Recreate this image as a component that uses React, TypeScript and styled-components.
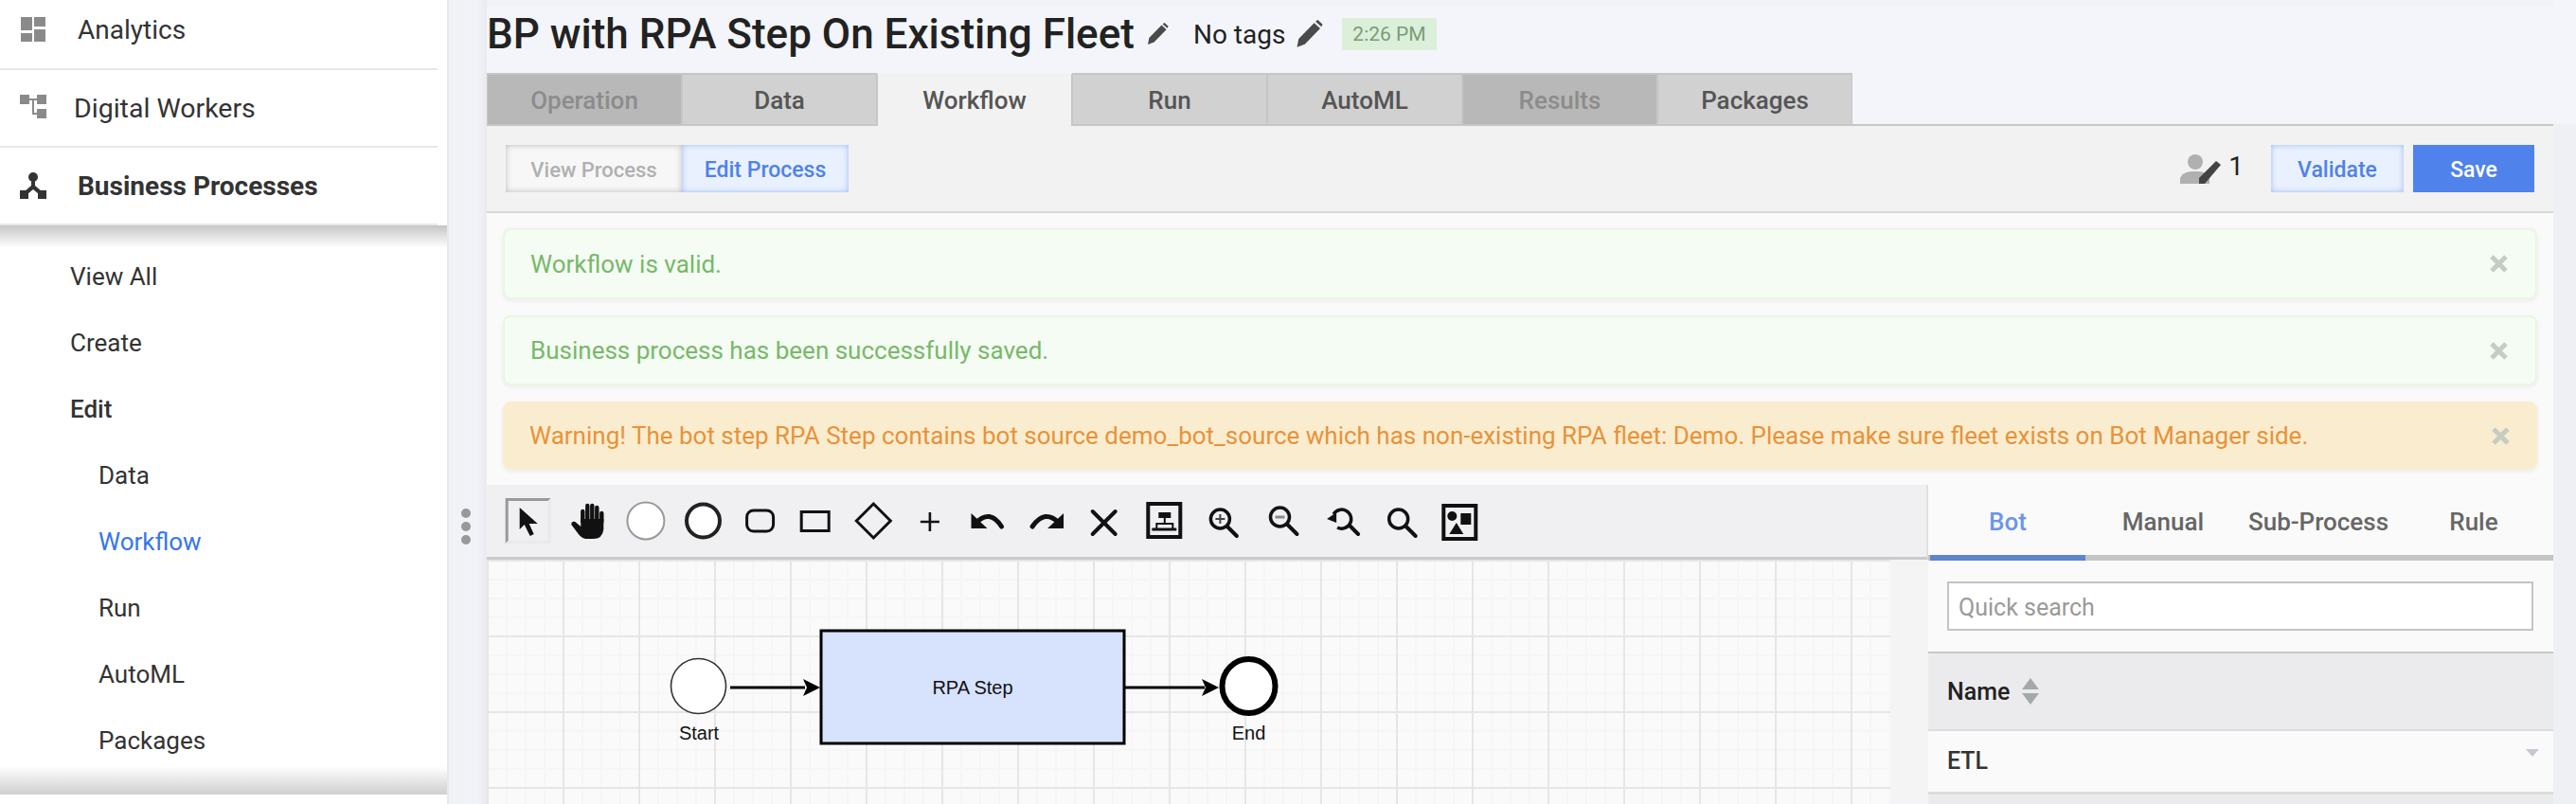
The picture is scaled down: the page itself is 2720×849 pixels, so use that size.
import styled, { createGlobalStyle } from "styled-components";

const GlobalStyle = createGlobalStyle`
  html, body {
    margin: 0;
    padding: 0;
    height: 849px;
    overflow: hidden;
    background: #f3f5fa;
    font-family: Roboto, "Liberation Sans", sans-serif;
  }
`;

const Page = styled.div`
  display: flex;
  width: 2720px;
  height: 849px;
  overflow: hidden;
  background: #f3f5fa;
`;

const Sidebar = styled.aside`
  flex: none;
  width: 472px;
  height: 849px;
  background: #fff;
  border-right: 2px solid #e8e8e8;
`;

const NavItem = styled.div<{ $first?: boolean; $active?: boolean; $indent: number; $size?: number }>`
  display: flex;
  align-items: center;
  box-sizing: border-box;
  height: ${(p) => (p.$first ? 74 : 82)}px;
  width: 462px;
  padding-bottom: ${(p) => (p.$first ? 9 : 0)}px;
  border-bottom: 2px solid #e8e8e8;
  padding-left: 21px;
  font-size: ${(p) => p.$size ?? 28}px;
  font-weight: ${(p) => (p.$active ? 700 : 400)};
  color: #333;

  svg {
    flex: none;
    width: 28px;
    height: 28px;
    margin-right: ${(p) => p.$indent}px;
  }
`;

const SubMenu = styled.div`
  box-sizing: border-box;
  height: 601px;
  padding-top: 19px;
  background:
    linear-gradient(#c6c6c6, #fff) top / 100% 24px no-repeat,
    linear-gradient(#fff, #cfcfcf) bottom / 100% 30px no-repeat,
    #fff;
`;

const SubItem = styled.div<{ $level: number; $current?: boolean; $open?: boolean }>`
  height: 70px;
  line-height: 70px;
  padding-left: ${(p) => (p.$level === 2 ? 104 : 74)}px;
  font-size: 26px;
  font-weight: ${(p) => (p.$open ? 500 : 400)};
  color: ${(p) => (p.$current ? "#3576ee" : "#333")};
`;

const Splitter = styled.div`
  flex: none;
  width: 40px;
  box-sizing: border-box;
  height: 849px;
  padding: 537px 4px 0 0;
  display: flex;
  flex-direction: column;
  align-items: center;
  gap: 4px;
  background: linear-gradient(90deg, #f0f2f6 0, #f1f3f8 76%, #e8eaee 100%);
`;

const Dot = styled.span`
  width: 10px;
  height: 10px;
  border-radius: 50%;
  background: #999;
`;

const Workspace = styled.main`
  flex: none;
  width: 2182px;
  height: 849px;
  overflow: hidden;
`;

const Gutter = styled.div`
  flex: 1;
  margin-top: 131px;
  background: #eef0f3;
`;

const TitleBar = styled.header`
  display: flex;
  align-items: center;
  box-sizing: border-box;
  height: 77px;
  padding: 0 0 12px 0;
  border-top: 7px solid #f1f2f6;
  color: #222;
`;

const Title = styled.h1`
  margin: 0;
  font-size: 44px;
  font-weight: 500;
  line-height: 1;
  white-space: nowrap;
`;

const PencilIcon = styled.svg<{ $size: number; $gap: number }>`
  flex: none;
  width: ${(p) => p.$size}px;
  height: ${(p) => p.$size}px;
  margin-left: ${(p) => p.$gap}px;
`;

const Tags = styled.span`
  margin-left: 26px;
  font-size: 28px;
`;

const TimeBadge = styled.span`
  margin-left: 20px;
  padding: 0 11px;
  height: 34px;
  line-height: 34px;
  background: #dcefd9;
  color: #7a9c78;
  font-size: 21px;
`;

const TabBar = styled.nav`
  display: flex;
  align-items: flex-start;
  box-sizing: border-box;
  height: 56px;
  border-bottom: 2px solid #c6c6c6;
`;

const Tab = styled.div<{ $state?: "active" | "disabled" }>`
  flex: none;
  box-sizing: border-box;
  width: 206px;
  height: ${(p) => (p.$state === "active" ? 56 : 54)}px;
  padding-top: 2px;
  line-height: 50px;
  text-align: center;
  font-size: 26px;
  font-weight: 500;
  border-top: 2px solid ${(p) => (p.$state === "active" ? "#f2f2f2" : "#c6c6c6")};
  border-left: 1px solid #c6c6c6;
  border-right: 1px solid #c6c6c6;
  background: ${(p) => (p.$state === "active" ? "#f2f2f2" : p.$state === "disabled" ? "#b8b8b8" : "#d1d1d1")};
  color: ${(p) => (p.$state === "disabled" ? "#8c8c8c" : "#555")};
`;

const ActionBar = styled.div`
  display: flex;
  align-items: center;
  box-sizing: border-box;
  height: 92px;
  padding: 0 20px;
  background: #f2f2f2;
  border-bottom: 2px solid #d8d8d8;
`;

const Button = styled.button<{ $kind: "ghost" | "soft" | "solid"; $width: number; $gap?: number }>`
  width: ${(p) => p.$width}px;
  height: 50px;
  margin-left: ${(p) => p.$gap ?? 0}px;
  padding: 2px 0 0;
  border: 0;
  font: 500 ${(p) => (p.$kind === "ghost" ? 22 : 23)}px Roboto, sans-serif;
  background: ${(p) => (p.$kind === "ghost" ? "#f7f7f7" : p.$kind === "soft" ? "#eaf1fe" : "#4f82ea")};
  color: ${(p) => (p.$kind === "ghost" ? "#b0b0b0" : p.$kind === "soft" ? "#4f82ea" : "#fff")};
  box-shadow: ${(p) =>
    p.$kind === "ghost" ? "inset 0 0 6px #b8b8b8" : p.$kind === "soft" ? "inset 0 0 6px #9db9f3" : "none"};
`;

const Spacer = styled.div`
  flex: 1;
`;

const UserCount = styled.div`
  display: flex;
  align-items: flex-start;
  margin-right: 29px;
  font-size: 28px;
  line-height: 30px;
  color: #222;
  svg {
    width: 44px;
    height: 34px;
    margin-right: 7px;
  }
`;

const Body = styled.div`
  background: #fafafa;
`;

const Alerts = styled.div`
  display: flex;
  flex-direction: column;
  gap: 17px;
  padding: 16px 17px;
`;

const Alert = styled.div<{ $kind: "ok" | "warn"; $height: number }>`
  display: flex;
  align-items: center;
  justify-content: space-between;
  box-sizing: border-box;
  height: ${(p) => p.$height}px;
  padding: 0 ${(p) => (p.$kind === "ok" ? 29 : 27)}px 0 ${(p) => (p.$kind === "ok" ? 27 : 26)}px;
  border-radius: 8px;
  font-size: 26px;
  background: ${(p) => (p.$kind === "ok" ? "#f4fcf3" : "#faedcf")};
  color: ${(p) => (p.$kind === "ok" ? "#78b86a" : "#e8923a")};
  border: 2px solid ${(p) => (p.$kind === "ok" ? "#e9f6e4" : "#faedcf")};
  box-shadow: 0 2px 5px rgba(0, 0, 0, 0.06);
`;

const CloseIcon = styled.svg`
  flex: none;
  width: 19px;
  height: 19px;
  stroke: #c7ccc3;
  stroke-width: 5;
`;

const Editor = styled.div`
  display: flex;
  height: 336px;
`;

const Modeler = styled.div`
  flex: none;
  width: 1522px;
  background: #f4f4f4;
`;

const ToolBar = styled.div`
  display: flex;
  box-sizing: border-box;
  height: 79px;
  padding-left: 13.3px;
  background: #f0f0f2;
  border-bottom: 3px solid #cbcbcb;
  border-right: 2px solid #e0e0e0;
`;

const ToolIcon = styled.svg`
  flex: none;
  width: 61.4px;
  height: 76px;
  overflow: visible;
`;

const Canvas = styled.div`
  width: 1482px;
  height: 260px;
  background-color: #fafafa;
  background-image:
    linear-gradient(90deg, #e6e6e6 2px, transparent 2px),
    linear-gradient(#e6e6e6 2px, transparent 2px),
    linear-gradient(90deg, #f6f6f6 2px, transparent 2px),
    linear-gradient(#f6f6f6 2px, transparent 2px);
  background-size: 80px 80px, 80px 80px, 20px 20px, 20px 20px;

  svg {
    display: block;
    width: 100%;
    height: 100%;
    overflow: visible;
  }
  text {
    font-family: "Liberation Sans", Arial, sans-serif;
    font-size: 20px;
    fill: #111;
    text-anchor: middle;
  }
`;

const Palette = styled.section`
  flex: none;
  width: 660px;
  box-sizing: border-box;
  background: #fafafa;
`;

const PaletteTabs = styled.div`
  display: flex;
  box-sizing: border-box;
  height: 80px;
  padding: 0 2px;
  border-bottom: 6px solid #c4c4c4;
`;

const PaletteTab = styled.div<{ $active?: boolean }>`
  flex: 1;
  height: 74px;
  line-height: 78px;
  text-align: center;
  font-size: 26px;
  font-weight: 500;
  color: ${(p) => (p.$active ? "#6a96e8" : "#666")};
  border-bottom: 6px solid ${(p) => (p.$active ? "#5c85cc" : "transparent")};
`;

const SearchWrap = styled.div`
  padding: 22px 21px 22px 20px;
`;

const SearchInput = styled.input`
  display: block;
  box-sizing: border-box;
  width: 100%;
  height: 52px;
  padding: 3px 10px 0;
  border: 2px solid #c4c4c4;
  background: #fff;
  font: 400 25px Roboto, sans-serif;
  outline: none;
  &::placeholder {
    color: #9a9a9a;
    opacity: 1;
  }
`;

const HeaderRow = styled.div`
  display: flex;
  align-items: center;
  box-sizing: border-box;
  height: 84px;
  padding-left: 20px;
  background: #ebebed;
  border-top: 2px solid #c8c8c8;
  border-bottom: 2px solid #ddd;
  font-size: 25px;
  font-weight: 500;
  color: #222;
  svg {
    width: 18px;
    height: 28px;
    margin-left: 13px;
  }
`;

const BodyRow = styled.div`
  position: relative;
  box-sizing: border-box;
  height: 67px;
  padding-left: 20px;
  line-height: 64px;
  font-size: 25px;
  font-weight: 500;
  color: #333;
  border-bottom: 3px solid #ddd;
`;

const RowCaret = styled.span`
  position: absolute;
  top: 19px;
  right: 15px;
  width: 0;
  height: 0;
  border-left: 7.5px solid transparent;
  border-right: 7.5px solid transparent;
  border-top: 8px solid #c5c8d0;
`;

const RowFill = styled.div`
  height: 30px;
  background: #ebebed;
`;

const Pencil = ({ size, gap }: { size: number; gap: number }) => (
  <PencilIcon $size={size} $gap={gap} viewBox="0 0 24 24">
    <path d="M2 23 L3.4 16 L16.5 2.6 L21.6 7.2 L8.6 20.6 Z" fill="#4a4a4a" />
    <path d="M17.6 1.4 L19.6 0 L23.6 3.8 L22.6 5.8 Z" fill="#4a4a4a" />
  </PencilIcon>
);

const Close = () => (
  <CloseIcon viewBox="0 0 19 19">
    <path d="M2 2L17 17M17 2L2 17" />
  </CloseIcon>
);

// viewBox keeps page coordinates so each glyph can be traced off the reference
const Tool = ({ slot, children }: { slot: number; children: React.ReactNode }) => (
  <ToolIcon viewBox={`${527.3 + 61.4 * slot} 513 61.4 76`} fill="none" stroke="#111" strokeWidth={3}>
    {children}
  </ToolIcon>
);

const tabs: { label: string; state?: "active" | "disabled" }[] = [
  { label: "Operation", state: "disabled" },
  { label: "Data" },
  { label: "Workflow", state: "active" },
  { label: "Run" },
  { label: "AutoML" },
  { label: "Results", state: "disabled" },
  { label: "Packages" },
];

export default function App() {
  return (
    <Page>
      <GlobalStyle />
      <Sidebar>
        <NavItem $first $indent={33}>
          <svg viewBox="0 0 28 28" fill="#8a8a8a">
            <rect x="1" y="0" width="12" height="14" />
            <rect x="15" y="0" width="12" height="10" />
            <rect x="1" y="17" width="12" height="9" />
            <rect x="15" y="13" width="12" height="13" />
          </svg>
          Analytics
        </NavItem>
        <NavItem $indent={29} $size={28.5}>
          <svg viewBox="0 0 28 28" fill="#8a8a8a">
            <rect x="0" y="0" width="10" height="10" />
            <rect x="18" y="0" width="10" height="10" />
            <rect x="18" y="15" width="10" height="10" />
            <path d="M10 4h8v2h-3v13h3v2h-5V6h-3z" />
          </svg>
          Digital Workers
        </NavItem>
        <NavItem $active $indent={33}>
          <svg viewBox="0 0 28 28" fill="#333">
            <circle cx="14" cy="5" r="5" />
            <rect x="0" y="19" width="9" height="9" />
            <rect x="19" y="19" width="9" height="9" />
            <path d="M12 8h4v6l7 6-3 3-6-5-6 5-3-3 7-6z" />
          </svg>
          Business Processes
        </NavItem>
        <SubMenu>
          <SubItem $level={1}>View All</SubItem>
          <SubItem $level={1}>Create</SubItem>
          <SubItem $level={1} $open>Edit</SubItem>
          <SubItem $level={2}>Data</SubItem>
          <SubItem $level={2} $current>Workflow</SubItem>
          <SubItem $level={2}>Run</SubItem>
          <SubItem $level={2}>AutoML</SubItem>
          <SubItem $level={2}>Packages</SubItem>
        </SubMenu>
      </Sidebar>

      <Splitter>
        <Dot />
        <Dot />
        <Dot />
      </Splitter>

      <Workspace>
        <TitleBar>
          <Title>BP with RPA Step On Existing Fleet</Title>
          <Pencil size={24} gap={12} />
          <Tags>No tags</Tags>
          <Pencil size={30} gap={10} />
          <TimeBadge>2:26 PM</TimeBadge>
        </TitleBar>

        <TabBar>
          {tabs.map((t) => (
            <Tab key={t.label} $state={t.state}>
              {t.label}
            </Tab>
          ))}
        </TabBar>

        <ActionBar>
          <Button $kind="ghost" $width={186}>View Process</Button>
          <Button $kind="soft" $width={176}>Edit Process</Button>
          <Spacer />
          <UserCount>
            <svg viewBox="0 0 44 34">
              <circle cx="16" cy="10" r="8" fill="#b0b0b0" />
              <path d="M0 33 V27 Q2 21 12 20 H20 Q28 21 31 26 V33 Z" fill="#b0b0b0" />
              <path d="M20 33 V27 L38 9 L43 13 L26 33 Z" fill="#444" />
            </svg>
            1
          </UserCount>
          <Button $kind="soft" $width={140}>Validate</Button>
          <Button $kind="solid" $width={128} $gap={10}>Save</Button>
        </ActionBar>

        <Body>
          <Alerts>
            <Alert $kind="ok" $height={75}>
              Workflow is valid.
              <Close />
            </Alert>
            <Alert $kind="ok" $height={74}>
              Business process has been successfully saved.
              <Close />
            </Alert>
            <Alert $kind="warn" $height={72}>
              Warning! The bot step RPA Step contains bot source demo_bot_source which has non-existing RPA fleet: Demo. Please make sure fleet exists on Bot Manager side.
              <Close />
            </Alert>
          </Alerts>

          <Editor>
            <Modeler>
              <ToolBar>
                <Tool slot={0}>
                  <path d="M534 575V527H582L579 530H537V572Z" fill="#999" stroke="none" />
                  <path d="M582 527V575H534L537 572H579V530Z" fill="#e9e9e9" stroke="none" />
                  <path d="M549 537 L568 554 L559 554 L564 565 L560 567 L554 555 L549 560Z" fill="#111" stroke="none" />
                </Tool>
                <Tool slot={1}>
                  <path d="M615 552V541M620 552V535M625 552V535M630 552V537M635 552V543" stroke="#111" strokeWidth={4.4} strokeLinecap="round" />
                  <path d="M613 549 H637 V560 Q636 570 626 570 H618 Q613 569 609 563 L603 555 Q603 551 607 552 L613 557Z" fill="#111" stroke="none" />
                </Tool>
                <Tool slot={2}>
                  <circle cx="682" cy="551" r="19.5" fill="#fff" stroke="#999" strokeWidth={2} />
                </Tool>
                <Tool slot={3}>
                  <circle cx="743" cy="551" r="17.5" fill="#fff" stroke="#222" strokeWidth={4} />
                </Tool>
                <Tool slot={4}>
                  <rect x="788.5" y="540" width="28" height="22" rx="7" />
                </Tool>
                <Tool slot={5}>
                  <rect x="846.5" y="541.5" width="29" height="20" />
                </Tool>
                <Tool slot={6}>
                  <path d="M922 533L940 551L922 569L904 551Z" />
                </Tool>
                <Tool slot={7}>
                  <path d="M972 552H992M982 542V562" strokeWidth={2.6} />
                </Tool>
                <Tool slot={8}>
                  <path d="M1026 543V559H1043Z" fill="#111" stroke="none" />
                  <path d="M1031 553Q1046 538 1058 557" strokeWidth={5} strokeLinecap="round" />
                </Tool>
                <Tool slot={9}>
                  <path d="M1123 543V559H1106Z" fill="#111" stroke="none" />
                  <path d="M1118 553Q1103 538 1090 557" strokeWidth={5} strokeLinecap="round" />
                </Tool>
                <Tool slot={10}>
                  <path d="M1154 541L1178 565M1178 541L1154 565" strokeWidth={4} strokeLinecap="round" />
                </Tool>
                <Tool slot={11}>
                  <rect x="1212" y="533" width="34" height="35" strokeWidth={4} />
                  <rect x="1223" y="542" width="13" height="6" fill="#111" stroke="none" />
                  <path d="M1229.5 548V555M1221 559V554H1238V559" strokeWidth={2} />
                  <path d="M1216 560H1242" strokeWidth={3} />
                </Tool>
                <Tool slot={12}>
                  <circle cx="1288.5" cy="549" r="10" strokeWidth={3.5} />
                  <path d="M1296 557L1306 567" strokeWidth={4} strokeLinecap="round" />
                  <path d="M1283.5 549H1293.5M1288.5 544V554" strokeWidth={2} stroke="#444" />
                </Tool>
                <Tool slot={13}>
                  <circle cx="1352" cy="547" r="10" strokeWidth={3.5} />
                  <path d="M1360 555L1370 565" strokeWidth={4} strokeLinecap="round" />
                  <path d="M1347 547H1357" strokeWidth={3} stroke="#888" />
                </Tool>
                <Tool slot={14}>
                  <path d="M1408 544A10 10 0 1 1 1412 558" strokeWidth={3.5} />
                  <path d="M1401 549L1411 542V553Z" fill="#111" stroke="none" />
                  <path d="M1425 556L1434 565" strokeWidth={4} strokeLinecap="round" />
                </Tool>
                <Tool slot={15}>
                  <circle cx="1477" cy="549" r="10" strokeWidth={3.5} />
                  <path d="M1485 557L1495 567" strokeWidth={4} strokeLinecap="round" />
                </Tool>
                <Tool slot={16}>
                  <rect x="1524" y="535" width="34" height="35" strokeWidth={4} />
                  <circle cx="1533" cy="546" r="5" fill="#111" stroke="none" />
                  <rect x="1542" y="543" width="11" height="12" fill="#111" stroke="none" />
                  <path d="M1537.5 553L1545 565H1530Z" fill="#111" stroke="none" />
                </Tool>
              </ToolBar>
              <Canvas>
                {/* page coordinates again, one px above the grid origin at (514, 592) */}
                <svg viewBox="514 591 1482 260">
                  <ellipse cx="737.5" cy="724.5" rx="29" ry="29" fill="#fff" stroke="#333" strokeWidth={1.6} />
                  <text x="738" y="781">Start</text>
                  <path d="M771 726H850" stroke="#000" strokeWidth={3} />
                  <path d="M848 717L866 726L848 735L852 726Z" fill="#000" />
                  <rect x="867" y="666" width="320" height="119" fill="#d7e2fc" stroke="#000" strokeWidth={3} />
                  <text x="1027" y="733">RPA Step</text>
                  <path d="M1188 726H1272" stroke="#000" strokeWidth={3} />
                  <path d="M1269 717L1287 726L1269 735L1273 726Z" fill="#000" />
                  <ellipse cx="1318.5" cy="724.5" rx="28" ry="28.5" fill="#fff" stroke="#000" strokeWidth={6} />
                  <text x="1318.5" y="781">End</text>
                </svg>
              </Canvas>
            </Modeler>
            <Palette>
              <PaletteTabs>
                <PaletteTab $active>Bot</PaletteTab>
                <PaletteTab>Manual</PaletteTab>
                <PaletteTab>Sub-Process</PaletteTab>
                <PaletteTab>Rule</PaletteTab>
              </PaletteTabs>
              <SearchWrap>
                <SearchInput placeholder="Quick search" />
              </SearchWrap>
              <HeaderRow>
                Name
                <svg viewBox="0 0 18 28" fill="#a5a8ab">
                  <path d="M9 0L18 12H0Z" />
                  <path d="M0 16H18L9 28Z" />
                </svg>
              </HeaderRow>
              <BodyRow>
                ETL
                <RowCaret />
              </BodyRow>
              <RowFill />
            </Palette>
          </Editor>
        </Body>
      </Workspace>
      <Gutter />
    </Page>
  );
}
